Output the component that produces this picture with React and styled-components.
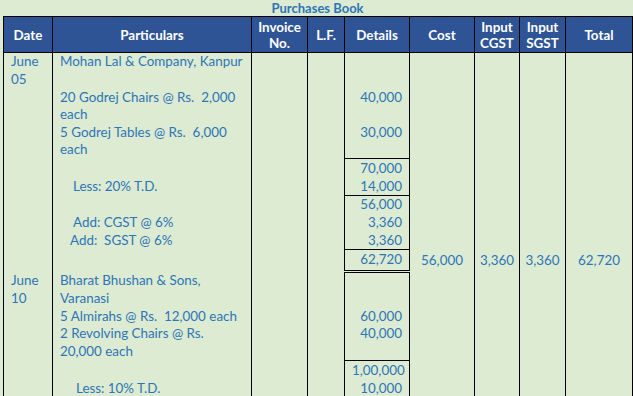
import React from "react";
import styled, { createGlobalStyle } from "styled-components";

const GlobalStyle = createGlobalStyle`
  html, body {
    margin: 0;
    padding: 0;
    background: #dcebd2;
  }
  body {
    font-family: Lato, "Liberation Sans", sans-serif;
    color: #2e75b6;
  }
`

const Page = styled.div`
  width: 633px;
  height: 396px;
  overflow: hidden;
  padding-left: 3px;
  box-sizing: border-box;
  background: #dcebd2;
`
const Title = styled.div`
  width: 629px;
  height: 16px;
  line-height: 16px;
  text-align: center;
  font-size: 13px;
  font-weight: 700;
  color: #2e75b6;
`
const Ledger = styled.table`
  width: 629px;
  table-layout: fixed;
  border-collapse: collapse;
  font-size: 13.4px;
`
const HeadCell = styled.th`
  box-sizing: border-box;
  height: 36px;
  padding: 0;
  background: #2f5496;
  color: #fff;
  font-weight: 700;
  font-size: 13.4px;
  line-height: 16px;
  text-align: center;
  vertical-align: middle;
  border: 1px solid #000;
`
const Cell = styled.td`
  box-sizing: border-box;
  height: ${(p) => p.$h}px;
  padding: 0 ${(p) => (p.$align === "right" ? 7 : 0)}px 0 ${(p) => 7 + (p.$indent || 0)}px;
  text-align: ${(p) => p.$align || "left"};
  white-space: pre;
  line-height: 1;
  vertical-align: middle;
  border-left: 1px solid #000;
  border-right: 1px solid #000;
  border-top: ${(p) => (p.$top ? "1px solid #000" : "none")};
  border-bottom: ${(p) =>
    p.$double ? "3px double #000" : p.$bottom ? "1px solid #000" : "none"};
`
const Centered = styled(Cell)`
  padding: 0;
  text-align: center;
`

const columns = [49, 199, 56, 37, 65, 65, 45, 46, 67];

const headings = [
  "Date",
  "Particulars",
  "Invoice\nNo.",
  "L.F.",
  "Details",
  "Cost",
  "Input\nCGST",
  "Input\nSGST",
  "Total",
];

// one entry per sheet row
const rows = [
  { h: 18, date: "June", part: "Mohan Lal & Company, Kanpur" },
  { h: 18, date: "05" },
  { h: 18, part: "20 Godrej Chairs @ Rs.  2,000", det: "40,000" },
  { h: 17, part: "each" },
  { h: 18, part: "5 Godrej Tables @ Rs.  6,000", det: "30,000" },
  { h: 17, part: "each" },
  { h: 19, det: "70,000", top: true },
  { h: 18, part: "Less: 20% T.D.", indent: 3, det: "14,000" },
  { h: 18, det: "56,000", top: true },
  { h: 18, part: "Add: CGST @ 6%", indent: 3, det: "3,360" },
  { h: 18, part: "Add:  SGST @ 6%", indent: 0, det: "3,360" },
  {
    h: 22,
    det: "62,720",
    top: true,
    double: true,
    cost: "56,000",
    cgst: "3,360",
    sgst: "3,360",
    total: "62,720",
  },
  { h: 19, date: "June", part: "Bharat Bhushan & Sons," },
  { h: 17, date: "10", part: "Varanasi" },
  { h: 18, part: "5 Almirahs @ Rs.  12,000 each", det: "60,000" },
  { h: 17, part: "2 Revolving Chairs @ Rs.", det: "40,000" },
  { h: 18, part: "20,000 each" },
  { h: 19, det: "1,00,000", top: true },
  { h: 18, part: "Less: 10% T.D.", indent: 6, det: "10,000", bottom: true },
];

export default function App() {
  return (
    <Page>
      <GlobalStyle />
      <Title>Purchases Book</Title>
      <Ledger>
        <colgroup>
          {columns.map((w, i) => (
            <col key={i} style={{ width: w }} />
          ))}
        </colgroup>
        <thead>
          <tr>
            {headings.map((text) => (
              <HeadCell key={text}>
                {text.split("\n").map((line) => (
                  <div key={line}>{line}</div>
                ))}
              </HeadCell>
            ))}
          </tr>
        </thead>
        <tbody>
          {rows.map((r, i) => (
            <tr key={i}>
              <Cell $h={r.h}>{r.date}</Cell>
              <Cell $h={r.h} $indent={r.part && r.indent != null ? r.indent + 10 : 0}>
                {r.part}
              </Cell>
              <Cell $h={r.h} />
              <Cell $h={r.h} />
              <Cell
                $h={r.h}
                $align="right"
                $top={r.top}
                $double={r.double}
                $bottom={r.bottom}
              >
                {r.det}
              </Cell>
              <Centered $h={r.h}>{r.cost}</Centered>
              <Centered $h={r.h}>{r.cgst}</Centered>
              <Centered $h={r.h}>{r.sgst}</Centered>
              <Centered $h={r.h}>{r.total}</Centered>
            </tr>
          ))}
        </tbody>
      </Ledger>
    </Page>
  );
}
